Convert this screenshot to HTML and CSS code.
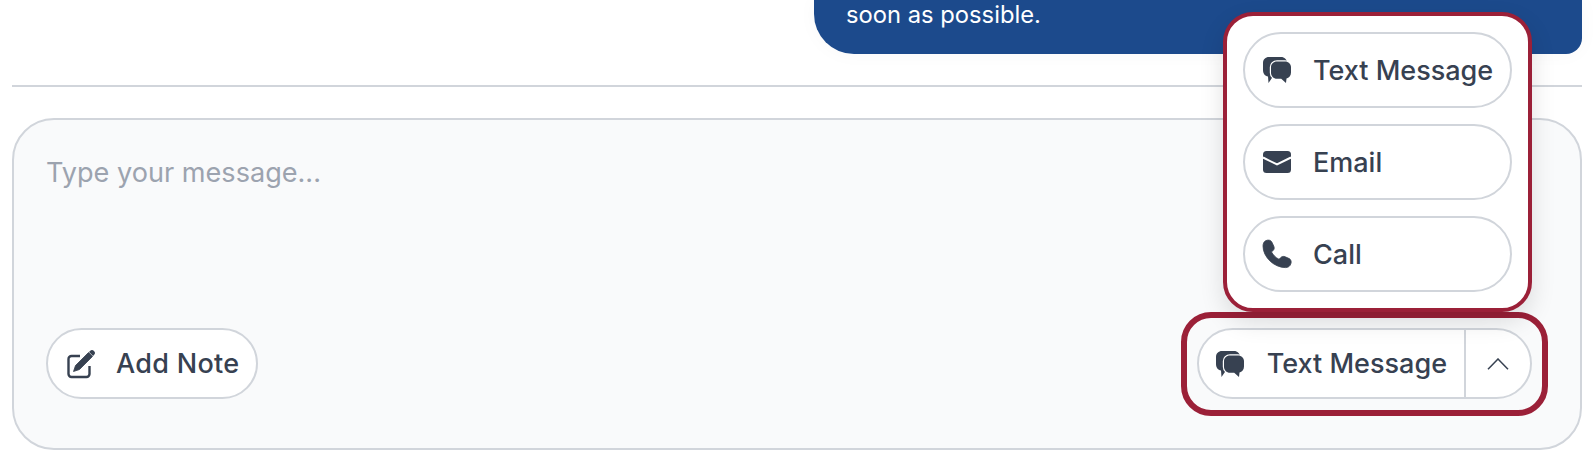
FILE: index.html
```html
<!DOCTYPE html>
<html lang="en">
<head>
<meta charset="utf-8">
<title>Message composer</title>
<link rel="stylesheet" href="styles.css">
</head>
<body>
<main class="page">
  <div class="thread">
    <div class="bubble">soon as possible.</div>
  </div>
  <hr class="rule">
  <section class="composer">
    <div class="placeholder">Type your message...</div>
    <div class="actions">
      <button class="pill note" type="button">
        <svg class="icon" viewBox="0 0 28 28" aria-hidden="true"><path class="outline" d="M13 6H4.500A3 3 0 0 0 1.500 9v15a3 3 0 0 0 3 3h15a3 3 0 0 0 3-3v-8"/><path class="solid heavy" d="M21.500 2.500 25.500 6.500 12.500 19.500 6.500 21.500 8.500 15.500Z"/><path class="solid" d="M23 1a2.800 2.800 0 0 1 4 4L26 6 22 2Z"/></svg>
        <span>Add Note</span>
      </button>
      <div class="highlight">
        <div class="split">
          <button class="split-main" type="button">
            <svg class="icon chat" viewBox="0 0 28 26" aria-hidden="true"><path class="solid" d="M6 0h12c3.500 0 6 2.500 6 6v7c0 3.500-2.500 6.500-6 6.500H10L5.500 26l-.5-6.500C2 19 0 16.500 0 13V6c0-3.500 2.500-6 6-6Z"/><path class="solid" d="M14 4.500h8c3.500 0 6 2.500 6 5.500v5.500c0 3-2 5.500-4.500 6L23 26l-4.800-4.300H14c-3.500 0-6-2.700-6-6V10c0-3 2.500-5.500 6-5.500Z"/></svg>
            <span>Text Message</span>
          </button>
          <button class="split-toggle" type="button" aria-label="Toggle channels">
            <svg class="chevron" viewBox="0 0 22 12" aria-hidden="true"><path d="M1 11.300 11 1l10 10.300"/></svg>
          </button>
        </div>
        <div class="menu">
          <button class="pill option" type="button">
            <svg class="icon chat" viewBox="0 0 28 26" aria-hidden="true"><path class="solid" d="M6 0h12c3.500 0 6 2.500 6 6v7c0 3.500-2.500 6.500-6 6.500H10L5.500 26l-.5-6.500C2 19 0 16.500 0 13V6c0-3.500 2.500-6 6-6Z"/><path class="solid" d="M14 4.500h8c3.500 0 6 2.500 6 5.500v5.500c0 3-2 5.500-4.500 6L23 26l-4.800-4.300H14c-3.500 0-6-2.700-6-6V10c0-3 2.500-5.500 6-5.500Z"/></svg>
            <span>Text Message</span>
          </button>
          <button class="pill option" type="button">
            <svg class="icon mail" viewBox="0 0 28 22" aria-hidden="true"><rect class="solid" width="28" height="22" rx="3.500"/><path class="flap" d="M0 6.500 14 13.500 28 6.500"/></svg>
            <span>Email</span>
          </button>
          <button class="pill option" type="button">
            <svg class="icon" viewBox="0 0 28 28" aria-hidden="true"><path class="solid heavy" d="M3 .6C5.300 -.5 7.800 .2 8.800 2l2 4.200c.8 1.800.4 3.400-1 4.600L8.500 12c1.700 3 4 5.500 7.500 7.300l1.500-1.500c1.200-1.400 3-1.800 4.700-1l4 1.800c1.700.9 2.400 3 1.700 5-.8 2.700-2.700 4-5.400 4C11 27.600 0 17 0 6 0 3.500 1 1.500 3 .6Z"/></svg>
            <span>Call</span>
          </button>
        </div>
      </div>
    </div>
  </section>
</main>
</body>
</html>
```
FILE: styles.css
```css
* {
  box-sizing: border-box;
}

html,
body {
  margin: 0;
  height: 100%;
  background: #fff;
}

body {
  overflow: hidden;
  font-family: Inter, "Liberation Sans", sans-serif;
  color: #374151;
}

.page {
  padding: 0 12px;
}

.thread {
  display: flex;
  justify-content: flex-end;
  height: 54px;
}

.bubble {
  width: 768px;
  height: 54px;
  padding: 0 32px 23px;
  display: flex;
  align-items: flex-end;
  background: #1c4a8c;
  color: #fff;
  font-size: 23.750px;
  line-height: 32px;
  border-radius: 0 0 16px 40px;
  box-shadow: 0 0 20px rgba(0, 0, 0, 0.03);
}

.rule {
  margin: 31px 0 0;
  border: 0;
  border-top: 2px solid #d1d5db;
}

.composer {
  display: flex;
  flex-direction: column;
  justify-content: space-between;
  height: 332px;
  margin-top: 31px;
  padding: 35px 32px 32px;
  background: #f9fafb;
  border: 2px solid #d1d5db;
  border-radius: 42px;
}

.placeholder {
  font-size: 27.100px;
  line-height: 36px;
  color: #9ca3af;
}

.actions {
  display: flex;
  justify-content: space-between;
  align-items: flex-end;
}

button {
  font: inherit;
  color: inherit;
  background: none;
  border: 0;
  padding: 0;
  white-space: nowrap;
}

.pill {
  display: flex;
  align-items: center;
  background: #fff;
  border: 2px solid #d1d5db;
  border-radius: 999px;
  font-size: 27px;
  font-weight: 500;
}

.note {
  height: 71px;
  margin-bottom: 17px;
  padding: 0 17px 0 19px;
  gap: 21px;
  letter-spacing: 0.3px;
}

.icon {
  flex: none;
  width: 28px;
  height: 28px;
  overflow: visible;
}

.icon.chat {
  height: 26px;
}

.icon.mail {
  height: 22px;
}

.solid {
  fill: #374151;
}

.heavy {
  stroke: #374151;
  stroke-width: 0.800;
  stroke-linejoin: round;
}

.chat .solid + .solid {
  stroke: #fff;
  stroke-width: 2.400;
  paint-order: stroke;
}

.outline {
  fill: none;
  stroke: #374151;
  stroke-width: 2.400;
}

.flap {
  fill: none;
  stroke: #fff;
  stroke-width: 2;
}

.highlight {
  position: relative;
  padding: 10px 10px 11px 10px;
  border: 6px solid #9b2038;
  border-radius: 30px;
}

.split {
  display: flex;
  height: 71px;
  background: #fff;
  border: 2px solid #d1d5db;
  border-radius: 999px;
  font-size: 27px;
  font-weight: 500;
}

.split-main {
  display: flex;
  align-items: center;
  gap: 23px;
  padding: 0 17px 0 17px;
  border-right: 2px solid #d1d5db;
}

.split-toggle {
  display: flex;
  align-items: center;
  justify-content: center;
  width: 64px;
}

.chevron {
  width: 22px;
  height: 12px;
  fill: none;
  stroke: #374151;
  stroke-width: 1.500;
}

.menu {
  position: absolute;
  right: 10px;
  bottom: calc(100% + 6px);
  display: flex;
  flex-direction: column;
  gap: 16px;
  width: 309px;
  padding: 16px;
  background: #fff;
  border: 4px solid #9b2038;
  border-radius: 30px;
  box-shadow: 0 10px 25px rgba(0, 0, 0, 0.12);
}

.option {
  height: 76px;
  padding: 0 16px 0 18px;
  gap: 22px;
}
```
